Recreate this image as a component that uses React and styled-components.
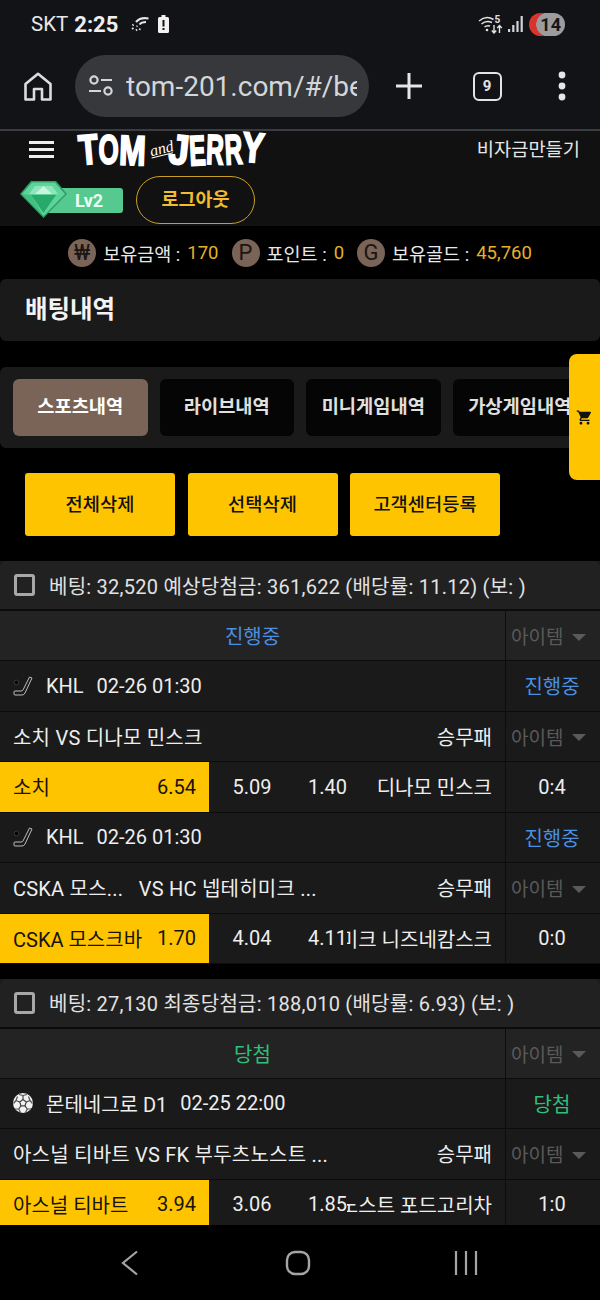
import React from 'react';
import styled, { createGlobalStyle } from 'styled-components';
import { MdShoppingCart } from 'react-icons/md';

const GlobalStyle = createGlobalStyle`
  html, body {
    margin: 0;
    padding: 0;
    background: #000;
  }
  * {
    box-sizing: border-box;
  }
`;

const Phone = styled.div`
  position: relative;
  width: 600px;
  height: 1300px;
  overflow: hidden;
  display: flex;
  flex-direction: column;
  background: #000;
  color: #eee;
  font-family: Roboto, "Noto Sans CJK KR", sans-serif;
`;

/* android chrome */
const StatusBar = styled.div`
  height: 55px;
  flex: none;
  display: flex;
  align-items: center;
  justify-content: space-between;
  padding: 0 35px 7px 31px;
  background: #121317;
`;
const StatusGroup = styled.div`
  display: flex;
  align-items: center;
`;
const Carrier = styled.span`
  font-size: 20.5px;
  color: #e8e8e8;
  margin-right: 6px;
`;
const Clock = styled.span`
  font-size: 22px;
  font-weight: 700;
  color: #eee;
  margin-right: 13px;
`;
const NotifyPill = styled.div`
  width: 36px;
  height: 23px;
  margin-left: 6px;
  border-radius: 12px;
  background:
    linear-gradient(90deg, transparent 19px, #9c9c9e 19px),
    radial-gradient(circle at 19px 11.5px, #9c9c9e 11.5px, #d8332c 12px);
  color: #17171a;
  font-size: 18px;
  font-weight: 700;
  display: flex;
  align-items: center;
  justify-content: flex-end;
  padding-right: 4px;
`;
const BrowserBar = styled.div`
  height: 76px;
  flex: none;
  display: flex;
  align-items: flex-start;
  padding-left: 22px;
  background: #121317;
  border-bottom: 2px solid #3b3c40;
`;
const BrowserIcon = styled.div`
  flex: none;
  width: ${(props) => props.$w}px;
  height: 62px;
  margin-left: ${(props) => props.$ml || 0}px;
  display: flex;
  align-items: center;
  justify-content: center;
`;
const UrlPill = styled.div`
  width: 294px;
  height: 62px;
  margin-left: 21px;
  padding: 0 12px 0 13px;
  border-radius: 31px;
  background: #37383c;
  display: flex;
  align-items: center;
  gap: 12px;
`;
const UrlText = styled.div`
  flex: 1;
  overflow: hidden;
  white-space: nowrap;
  font-size: 28px;
  color: #d5d6da;
`;
const TabCount = styled.div`
  width: 29px;
  height: 29px;
  border: 2.5px solid #e4e4e6;
  border-radius: 6px;
  font-size: 15px;
  font-weight: 700;
  color: #e4e4e6;
  display: flex;
  align-items: center;
  justify-content: center;
`;
const SystemNav = styled.div`
  height: 75px;
  flex: none;
  background: #000;
  display: flex;
  align-items: flex-start;
  padding: 25px 0 0 120px;
`;
const NavSlot = styled.div`
  display: flex;
  margin-left: ${(props) => props.$ml || 0}px;
`;

/* site header */
const SiteHeader = styled.header`
  flex: none;
  height: 95px;
  background: #111;
`;
const HeaderTop = styled.div`
  height: 45px;
  display: flex;
  align-items: flex-start;
  justify-content: space-between;
  padding: 0 20px 0 29px;
`;
const Burger = styled.div`
  width: 25px;
  margin-top: 10px;
  display: flex;
  flex-direction: column;
  gap: 4px;
  span {
    height: 3px;
    background: #eee;
  }
`;
const Logo = styled.div`
  flex: none;
  margin-left: 25px;
  margin-right: auto;
  height: 38px;
  display: flex;
  align-items: center;
  font-family: "Liberation Sans", sans-serif;
  font-weight: 700;
  color: #fff;
  white-space: nowrap;
`;
const LogoLetter = styled.span`
  flex: none;
  width: ${(props) => props.$w}px;
  display: flex;
  justify-content: center;
  font-size: 42px;
  line-height: 38px;
  -webkit-text-stroke: 2px #fff;
  transform: translateY(${(props) => props.$y || 0}px) rotate(${(props) => props.$r || 0}deg) scaleX(${(props) => props.$sx});
`;
const LogoAnd = styled.span`
  flex: none;
  width: 22px;
  margin: 0 -3px 0 4px;
  font-family: "Liberation Serif", serif;
  font-style: italic;
  font-size: 16px;
  font-weight: 400;
  border-bottom: 1px solid #fff;
  line-height: 13px;
  transform: rotate(-14deg) translateY(-1px);
`;
const MakeFund = styled.div`
  font-size: 18.7px;
  color: #e6e6e6;
  margin-top: 3px;
`;
const HeaderBottom = styled.div`
  display: flex;
  align-items: center;
  padding-left: 20px;
`;
const LevelBadge = styled.div`
  position: relative;
  width: 103px;
  height: 38px;
  display: flex;
  align-items: center;
`;
const LevelLabel = styled.div`
  margin-left: 24px;
  width: 79px;
  height: 25px;
  border-radius: 3px;
  background: #55c98f;
  color: #eafff4;
  font-size: 18px;
  font-weight: 700;
  display: flex;
  align-items: center;
  padding-left: 31px;
`;
const GemIcon = styled.svg`
  position: absolute;
  left: 0;
  top: 0;
`;
const LogoutButton = styled.button`
  width: 119px;
  height: 48px;
  margin-left: 13px;
  padding: 0 0 4px;
  background: transparent;
  border: 1.5px solid #c99f22;
  border-radius: 24px;
  color: #f2bd2e;
  font-family: inherit;
  font-size: 18.5px;
  font-weight: 700;
`;

/* page */
const Content = styled.main`
  flex: 1;
  min-height: 0;
  overflow: hidden;
`;
const BalanceRow = styled.div`
  height: 53px;
  display: flex;
  align-items: center;
  justify-content: center;
  gap: 13px;
  font-size: 18.5px;
  color: #e8e8e8;
`;
const BalanceItem = styled.div`
  display: flex;
  align-items: center;
  gap: 7px;
  b {
    font-weight: 400;
    color: #e5b02a;
  }
`;
const Coin = styled.span`
  width: 28px;
  height: 28px;
  border-radius: 50%;
  background: #7a6357;
  color: #1b1613;
  font-size: 22px;
  display: flex;
  align-items: center;
  justify-content: center;
`;
const TitleBar = styled.h1`
  height: 62px;
  margin: 0;
  padding: 0 0 6px 25px;
  border-radius: 6px;
  background: #1a1a1a;
  color: #f3f3f3;
  font-size: 24.5px;
  font-weight: 700;
  display: flex;
  align-items: center;
`;
const TabPanel = styled.div`
  height: 81px;
  margin-top: 26px;
  padding: 12px 0 12px 13px;
  border-radius: 6px;
  background: #1a1a1a;
  display: flex;
  gap: 12px;
  overflow: hidden;
`;
const Tab = styled.div`
  flex: none;
  width: 134.5px;
  height: 57px;
  padding-bottom: 6px;
  border-radius: 6px;
  background: ${(props) => (props.$active ? '#7a6357' : '#050505')};
  color: ${(props) => (props.$active ? '#fff' : '#e0e0e0')};
  font-size: 18.7px;
  font-weight: 700;
  white-space: nowrap;
  display: flex;
  align-items: center;
  justify-content: center;
`;
const CartTab = styled.div`
  position: absolute;
  top: 354px;
  right: 0;
  width: 31px;
  height: 126px;
  border-radius: 8px 0 0 8px;
  background: #ffc400;
  display: flex;
  align-items: center;
  justify-content: center;
  color: #111;
`;
const ActionRow = styled.div`
  margin-top: 25px;
  padding-left: 25px;
  display: flex;
  gap: 12.5px;
`;
const ActionButton = styled.button`
  width: 150px;
  height: 63px;
  padding: 0 0 5px;
  border: 0;
  border-radius: 3px;
  background: #ffc400;
  color: #111;
  font-family: inherit;
  font-size: 18.7px;
  font-weight: 500;
`;

/* bet history */
const BetCard = styled.section`
  margin-top: ${(props) => props.$mt}px;
  background: #1a1a1a;
`;
const BetHead = styled.div`
  height: 50px;
  display: flex;
  align-items: center;
  gap: 14px;
  padding-left: 14px;
  border-radius: 6px 6px 0 0;
  background: #212121;
  border-bottom: 2px solid #0c0c0c;
  font-size: 20px;
  letter-spacing: 0.25px;
  color: #e2e2e2;
  white-space: nowrap;
`;
const CheckBox = styled.span`
  flex: none;
  width: 21px;
  height: 22px;
  border: 3px solid #a8a8a8;
  border-radius: 3px;
`;
const Row = styled.div`
  height: ${(props) => props.$h || 50.5}px;
  display: grid;
  grid-template-columns: 505px 95px;
  background: ${(props) => (props.$head ? '#232323' : '#1a1a1a')};
  border-bottom: 1px solid #0c0c0c;
`;
const Cell = styled.div`
  min-width: 0;
  display: flex;
  align-items: center;
  padding: 0 13px;
  font-size: 20px;
  white-space: pre;
  overflow: hidden;
`;
const StatusCell = styled(Cell)`
  justify-content: center;
  color: ${(props) => props.$color};
`;
const LeagueIcon = styled.span`
  flex: none;
  width: 20px;
  height: 20px;
  margin-right: 13px;
  display: flex;
`;
const DateText = styled.span`
  margin-left: 13px;
`;
const MatchTitle = styled.span`
  letter-spacing: 0.22px;
`;
const BetType = styled.span`
  margin-left: auto;
`;
const SideCell = styled.div`
  display: flex;
  align-items: center;
  justify-content: center;
  border-left: 1.5px solid #0c0c0c;
  padding-right: 2px;
  font-size: 20px;
  color: ${(props) => props.$color || '#eee'};
`;
const ItemSelect = styled(SideCell)`
  justify-content: flex-start;
  padding: 0 0 0 5px;
  font-size: 19px;
  color: #5a5a5a;
  &::after {
    content: '';
    margin-left: 9px;
    margin-top: 3px;
    border-left: 7px solid transparent;
    border-right: 7px solid transparent;
    border-top: 7px solid #5a5a5a;
  }
`;
const OddsGrid = styled.div`
  min-width: 0;
  display: grid;
  grid-template-columns: 209px 86px 210px;
  font-size: 20px;
`;
const HomePick = styled.div`
  display: flex;
  align-items: center;
  justify-content: space-between;
  padding: 0 13px;
  background: #ffc400;
  color: #17130a;
  white-space: nowrap;
`;
const DrawOdds = styled.div`
  display: flex;
  align-items: center;
  justify-content: center;
`;
const AwayPick = styled.div`
  min-width: 0;
  display: flex;
  align-items: center;
  padding: 0 13px;
`;
const AwayName = styled.div`
  flex: 1;
  min-width: 0;
  display: flex;
  justify-content: flex-end;
  overflow: hidden;
  white-space: nowrap;
`;

const HockeyIcon = () => (
  <svg width="20" height="20" viewBox="0 0 20 20" fill="none">
    <circle cx="3.5" cy="6.5" r="2.4" fill="#050505" stroke="#3a3a3a" strokeWidth="1" />
    <path d="M16.5 1 L19 2 L12 17 Q11 19 9 19 H2 Q1 19 1 18 V16 Q1 15 2 15 H8 Q9.5 15 10 14 Z" stroke="#bdbdbd" strokeWidth="1" />
  </svg>
);

const SoccerIcon = () => (
  <svg width="20" height="20" viewBox="0 0 20 20" fill="none">
    <circle cx="10" cy="10" r="10" fill="#f2f2f2" />
    <path d="M10 6.5 L13.3 9 L12 12.8 H8 L6.7 9 Z" stroke="#444" strokeWidth="1.2" />
    <path d="M10 6.5 V2.5 M13.3 9 L17 7.5 M12 12.8 L14.3 16 M8 12.8 L5.7 16 M6.7 9 L3 7.5" stroke="#444" strokeWidth="1.2" />
    <path d="M10 2.5 L6 1.5 M10 2.5 L14 1.5 M17 7.5 L15.5 3.5 M17 7.5 L19.5 10.5 M14.3 16 H18 M14.3 16 L12.5 19.5 M5.7 16 H2 M5.7 16 L7.5 19.5 M3 7.5 L4.5 3.5 M3 7.5 L.5 10.5" stroke="#555" strokeWidth="1.2" />
  </svg>
);

const Gem = () => (
  <GemIcon width="47" height="37" viewBox="0 0 47 37">
    <path d="M11 0 H36 L47 13 L23.5 37 L0 13 Z" fill="#2f9e68" />
    <path d="M12 1.5 H35 L45 13 L23.5 35 L2 13 Z" fill="#5ed39a" />
    <path d="M15 5 H32 L38 13 H9 Z" fill="#8fe5bb" />
    <path d="M23.5 5 L32 13 H15 Z" fill="#c8f4de" />
    <path d="M11 14 H36 L23.5 32 Z" fill="#27a96a" />
    <path d="M2 13 L23.5 35 L11 14 Z" fill="#41c082" />
  </GemIcon>
);

const LOGO_LEFT = [
  { ch: 'T', w: 19, sx: 0.76, r: -5, y: 0 },
  { ch: 'O', w: 21, sx: 0.62, r: 0, y: 0 },
  { ch: 'M', w: 27, sx: 0.76, r: 2, y: 1 },
];
const LOGO_RIGHT = [
  { ch: 'J', w: 20, sx: 0.85, r: 6, y: 0 },
  { ch: 'E', w: 17, sx: 0.58, r: -3, y: 1 },
  { ch: 'R', w: 18, sx: 0.58, r: 2, y: 0 },
  { ch: 'R', w: 19, sx: 0.58, r: -3, y: 0 },
  { ch: 'Y', w: 20, sx: 0.78, r: 5, y: -2 },
];

const LogoWord = ({ letters }) =>
  letters.map((l, i) => (
    <LogoLetter key={i} $w={l.w} $sx={l.sx} $r={l.r} $y={l.y}>
      {l.ch}
    </LogoLetter>
  ));

const Bet = ({ league, date, status, statusColor, icon, title, home, homeOdds, draw, awayOdds, away, score }) => (
  <>
    <Row>
      <Cell>
        <LeagueIcon>{icon}</LeagueIcon>
        {league}
        <DateText>{date}</DateText>
      </Cell>
      <SideCell $color={statusColor}>{status}</SideCell>
    </Row>
    <Row>
      <Cell>
        <MatchTitle>{title}</MatchTitle>
        <BetType>승무패</BetType>
      </Cell>
      <ItemSelect>아이템</ItemSelect>
    </Row>
    <Row>
      <OddsGrid>
        <HomePick>
          <span>{home}</span>
          <span>{homeOdds}</span>
        </HomePick>
        <DrawOdds>{draw}</DrawOdds>
        <AwayPick>
          <span>{awayOdds}</span>
          <AwayName>{away}</AwayName>
        </AwayPick>
      </OddsGrid>
      <SideCell>{score}</SideCell>
    </Row>
  </>
);

export default function App() {
  return (
    <Phone>
      <GlobalStyle />
      <StatusBar>
        <StatusGroup>
          <Carrier>SKT</Carrier>
          <Clock>2:25</Clock>
          <svg width="18" height="15" viewBox="0 0 18 15" fill="none" stroke="#e4e4e4">
            <path d="M17.5 1.5 C12 .5 8 1.5 5 5" strokeWidth="2.2" />
            <path d="M15 5 C12 5 10 5.5 8.5 7.5" strokeWidth="1.8" />
            <path d="M1.5 8.5 L2.5 7.5 M1 12 L2.5 11 M5 13.5 L6 12.5 M8.5 13 L9 11.5 M5.5 9.5 L6.5 9" strokeWidth="1.8" />
          </svg>
          <svg width="11" height="18" viewBox="0 0 11 18" style={{ marginLeft: 9 }}>
            <path d="M3.5 0 H7.5 V2 H9.5 Q11 2 11 3.5 V16.5 Q11 18 9.5 18 H1.5 Q0 18 0 16.5 V3.5 Q0 2 1.5 2 H3.5 Z" fill="#f2f2f2" />
            <rect x="4.5" y="5" width="2" height="6.5" fill="#121317" />
            <rect x="4.5" y="13" width="2" height="2" fill="#121317" />
          </svg>
        </StatusGroup>
        <StatusGroup>
          <svg width="25" height="20" viewBox="0 0 25 20" fill="none" stroke="#e2e2e2" strokeWidth="1.5">
            <path d="M1 7 Q8 1 15.5 5.5 M3.5 10 Q8 6 14 8.5 M6.5 13 Q9 11 12 12" />
            <circle cx="9" cy="16" r="1.3" fill="#e2e2e2" stroke="none" />
            <path d="M16 11 V19 M13.8 16.5 L16 19 L18.2 16.5 M21.5 19 V11.5 M19.2 14 L21.5 11.5 L23.8 14" strokeWidth="1.4" />
            <text x="16.5" y="9" fontSize="10" fontWeight="700" fill="#e2e2e2" stroke="none" fontFamily="Roboto, sans-serif">5</text>
          </svg>
          <svg width="15" height="18" viewBox="0 0 15 18" fill="#d4d4d4" style={{ marginLeft: 5 }}>
            <rect x="0" y="14" width="2.2" height="3" />
            <rect x="4.2" y="10" width="2.2" height="7" />
            <rect x="8.4" y="6" width="2.2" height="11" />
            <rect x="12.6" y="1" width="2.2" height="16" />
          </svg>
          <NotifyPill>14</NotifyPill>
        </StatusGroup>
      </StatusBar>

      <BrowserBar>
        <BrowserIcon $w={32}>
          <svg width="28" height="29" viewBox="0 0 28 29" fill="none" stroke="#dcdde0" strokeWidth="2.6" strokeLinejoin="round">
            <path d="M1.5 12 L14 1.8 L26.5 12 V27.5 H18 V17 H10 V27.5 H1.5 Z" />
          </svg>
        </BrowserIcon>
        <UrlPill>
          <svg width="26" height="24" viewBox="0 0 26 24" fill="none" stroke="#d5d6da" strokeWidth="2.2">
            <circle cx="6" cy="6" r="3.6" />
            <path d="M13 6 H24 M1 17 H13" />
            <circle cx="20" cy="17" r="3.6" />
          </svg>
          <UrlText>tom-201.com/#/be</UrlText>
        </UrlPill>
        <BrowserIcon $w={32} $ml={24}>
          <svg width="28" height="28" viewBox="0 0 28 28" stroke="#e6e6e8" strokeWidth="3">
            <path d="M14 1 V27 M1 14 H27" />
          </svg>
        </BrowserIcon>
        <BrowserIcon $w={32} $ml={46}>
          <TabCount>9</TabCount>
        </BrowserIcon>
        <BrowserIcon $w={10} $ml={54}>
          <svg width="10" height="30" viewBox="0 0 10 30" fill="#e6e6e8">
            <circle cx="5" cy="4" r="3.4" />
            <circle cx="5" cy="15" r="3.4" />
            <circle cx="5" cy="26" r="3.4" />
          </svg>
        </BrowserIcon>
      </BrowserBar>

      <SiteHeader>
        <HeaderTop>
          <Burger>
            <span />
            <span />
            <span />
          </Burger>
          <Logo>
            <LogoWord letters={LOGO_LEFT} />
            <LogoAnd>and</LogoAnd>
            <LogoWord letters={LOGO_RIGHT} />
          </Logo>
          <MakeFund>비자금만들기</MakeFund>
        </HeaderTop>
        <HeaderBottom>
          <LevelBadge>
            <LevelLabel>Lv2</LevelLabel>
            <Gem />
          </LevelBadge>
          <LogoutButton>로그아웃</LogoutButton>
        </HeaderBottom>
      </SiteHeader>

      <Content>
        <BalanceRow>
          <BalanceItem>
            <Coin>₩</Coin>
            보유금액 : <b>170</b>
          </BalanceItem>
          <BalanceItem>
            <Coin>P</Coin>
            포인트 : <b>0</b>
          </BalanceItem>
          <BalanceItem>
            <Coin>G</Coin>
            보유골드 : <b>45,760</b>
          </BalanceItem>
        </BalanceRow>
        <TitleBar>배팅내역</TitleBar>
        <TabPanel>
          <Tab $active>스포츠내역</Tab>
          <Tab>라이브내역</Tab>
          <Tab>미니게임내역</Tab>
          <Tab>가상게임내역</Tab>
        </TabPanel>
        <ActionRow>
          <ActionButton>전체삭제</ActionButton>
          <ActionButton>선택삭제</ActionButton>
          <ActionButton>고객센터등록</ActionButton>
        </ActionRow>

        <BetCard $mt={25}>
          <BetHead>
            <CheckBox />
            베팅: 32,520 예상당첨금: 361,622 (배당률: 11.12) (보: )
          </BetHead>
          <Row $head $h={50}>
            <StatusCell $color="#4a90e2">진행중</StatusCell>
            <ItemSelect>아이템</ItemSelect>
          </Row>
          <Bet
            league="KHL"
            date="02-26 01:30"
            status="진행중"
            statusColor="#4a90e2"
            icon={<HockeyIcon />}
            title="소치 VS 디나모 민스크"
            home="소치"
            homeOdds="6.54"
            draw="5.09"
            awayOdds="1.40"
            away="디나모 민스크"
            score="0:4"
          />
          <Bet
            league="KHL"
            date="02-26 01:30"
            status="진행중"
            statusColor="#4a90e2"
            icon={<HockeyIcon />}
            title="CSKA 모스...   VS HC 넵테히미크 ..."
            home="CSKA 모스크바"
            homeOdds="1.70"
            draw="4.04"
            awayOdds="4.11"
            away="HC 넵테히미크 니즈네캄스크"
            score="0:0"
          />
        </BetCard>

        <BetCard $mt={14.5}>
          <BetHead>
            <CheckBox />
            베팅: 27,130 최종당첨금: 188,010 (배당률: 6.93) (보: )
          </BetHead>
          <Row $head $h={50}>
            <StatusCell $color="#2fc07a">당첨</StatusCell>
            <ItemSelect>아이템</ItemSelect>
          </Row>
          <Bet
            league="몬테네그로 D1"
            date="02-25 22:00"
            status="당첨"
            statusColor="#2fc07a"
            icon={<SoccerIcon />}
            title="아스널 티바트 VS FK 부두츠노스트 ..."
            home="아스널 티바트"
            homeOdds="3.94"
            draw="3.06"
            awayOdds="1.85"
            away="FK 부두츠노스트 포드고리차"
            score="1:0"
          />
        </BetCard>
      </Content>

      <SystemNav>
        <NavSlot>
          <svg width="20" height="26" viewBox="0 0 20 26" fill="none" stroke="#a5a5a5" strokeWidth="2.2">
            <path d="M17 1.5 L3 13 L17 24.5" />
          </svg>
        </NavSlot>
        <NavSlot $ml={145}>
          <svg width="26" height="26" viewBox="0 0 26 26" fill="none" stroke="#a5a5a5" strokeWidth="2.4">
            <rect x="2" y="2" width="22" height="22" rx="8" />
          </svg>
        </NavSlot>
        <NavSlot $ml={143}>
          <svg width="24" height="26" viewBox="0 0 24 26" stroke="#a5a5a5" strokeWidth="2.2">
            <path d="M2 1 V25 M12 1 V25 M22 1 V25" />
          </svg>
        </NavSlot>
      </SystemNav>

      <CartTab>
        <MdShoppingCart size={17} />
      </CartTab>
    </Phone>
  );
}
